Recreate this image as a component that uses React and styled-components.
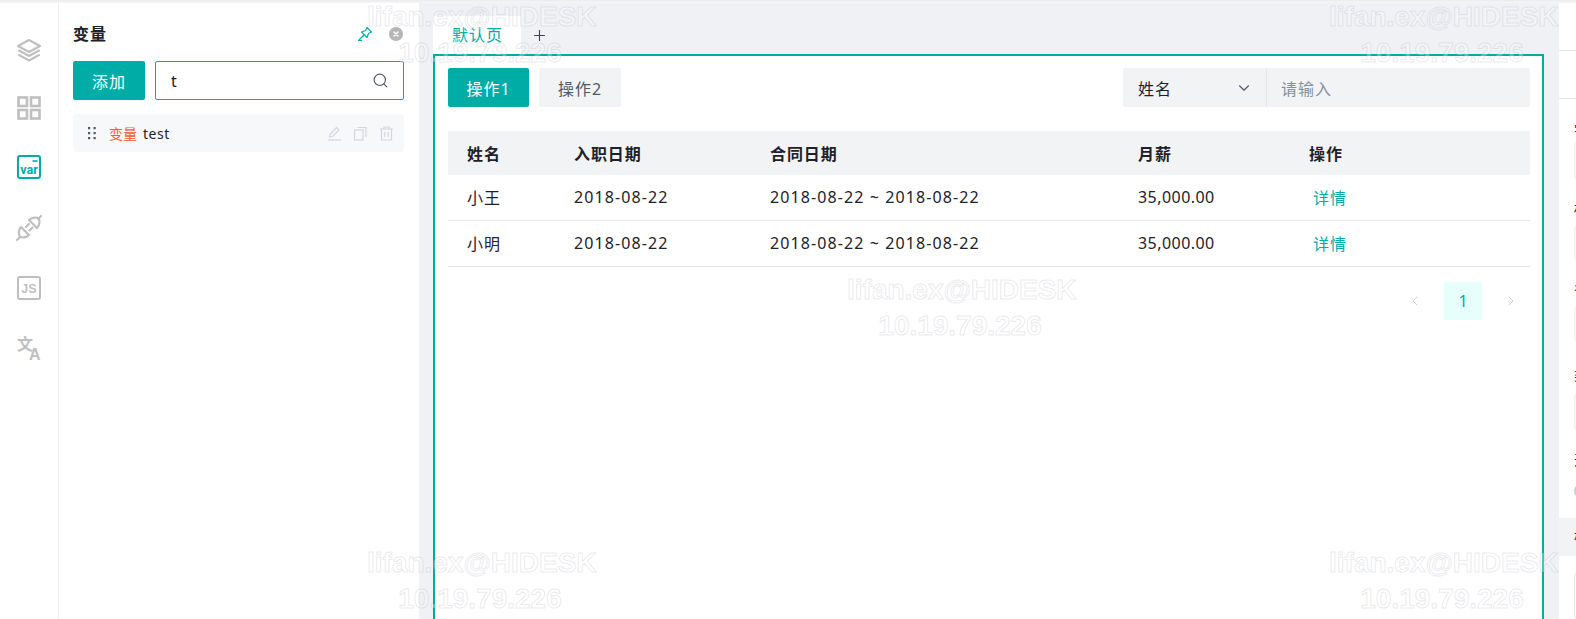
import React from 'react';
import styled, { createGlobalStyle } from 'styled-components';
import { Search, ChevronDown, ChevronLeft, ChevronRight, Plus } from 'lucide-react';

const TEAL = '#00ada6';

const Global = createGlobalStyle`
  html, body { margin: 0; padding: 0; height: 100%; overflow: hidden; background: #fff; }
  #root { height: 100%; }
  * { box-sizing: border-box; }
  body { font-family: "Noto Sans", "Noto Sans CJK SC", sans-serif; color: #1d2129; }
`;

const Page = styled.div`
  position: relative;
  width: 1576px;
  height: 619px;
  overflow: hidden;
  display: flex;
  flex-direction: column;
`;
const TopEdge = styled.div`
  flex: none;
  height: 3px;
  background: linear-gradient(#ececee, #f6f6f7);
`;
const Body = styled.div`
  flex: 1;
  min-height: 0;
  display: flex;
`;

const Rail = styled.nav`
  flex: none;
  width: 59px;
  border-right: 1px solid #eeeeee;
  display: flex;
  flex-direction: column;
  align-items: center;
  padding: 35px 1px 0 0;
  gap: 36px;
`;
const RailIcon = styled.svg`
  width: 24px;
  height: 24px;
  display: block;
  flex: none;
  overflow: visible;
  margin-top: ${p => p.$nudge || 0}px;
  color: ${p => (p.$active ? TEAL : '#bfbfbf')};
`;

const Panel = styled.aside`
  flex: none;
  width: 360px;
  padding: 0 15px 0 14px;
  display: flex;
  flex-direction: column;
`;
const PanelHead = styled.div`
  height: 58px;
  display: flex;
  align-items: center;
  padding-top: 4px;
`;
const PanelTitle = styled.h2`
  margin: 0;
  flex: 1;
  font-size: 16px;
  line-height: 22px;
  letter-spacing: 1px;
  font-weight: 700;
`;
const CloseDot = styled.svg`
  width: 14px;
  height: 14px;
  margin-left: 16px;
  margin-right: 1px;
`;
const AddRow = styled.div`
  display: flex;
  gap: 10px;
  height: 39px;
`;
const PrimaryButton = styled.button`
  flex: none;
  width: ${p => p.$w}px;
  height: 39px;
  border: 0;
  border-radius: 2px;
  background: ${TEAL};
  color: #fff;
  font: inherit;
  font-size: 16px;
  letter-spacing: 1px;
  padding: 0;
`;
const SearchBox = styled.div`
  flex: 1;
  display: flex;
  align-items: center;
  border: 1px solid #14a8a3;
  border-radius: 2px;
  padding: 0 14px 0 15px;
  color: #4e5969;
`;
const SearchInput = styled.span`
  flex: 1;
  font-size: 16px;
  color: #1d2129;
`;
const VarRow = styled.div`
  margin-top: 14px;
  height: 38px;
  background: #f7f8fa;
  border-radius: 4px;
  display: flex;
  align-items: center;
  padding: 0 10px 0 15px;
  font-size: 14px;
`;
const Grip = styled.svg`
  width: 8px;
  height: 14px;
  margin-right: 13px;
  color: #4e5969;
`;
const VarKind = styled.span`
  color: #ff5a1f;
  margin-right: 6px;
`;
const VarName = styled.span`
  flex: 1;
  letter-spacing: 0.5px;
`;
const RowIcon = styled.svg`
  width: 15px;
  height: 15px;
  margin-left: 11px;
  color: #d4d6dc;
`;

const Main = styled.main`
  flex: none;
  width: 1140px;
  background: #f0f1f5;
  padding: 0 15px 0 14px;
  display: flex;
  flex-direction: column;
  min-height: 0;
`;
const TabBar = styled.div`
  flex: none;
  height: 51px;
  padding-top: 13px;
  display: flex;
  align-items: stretch;
`;
const Tab = styled.div`
  width: 88px;
  background: #fff;
  color: ${TEAL};
  font-size: 16px;
  letter-spacing: 1px;
  line-height: 22px;
  padding: 8px 0 0 19px;
`;
const AddTab = styled.div`
  width: 36px;
  display: flex;
  align-items: center;
  justify-content: center;
  color: #3d4450;
`;
const Frame = styled.section`
  flex: 1;
  min-height: 0;
  background: #fff;
  border: 2px solid ${TEAL};
  border-bottom: 0;
  padding: 12px 12px 0 13px;
`;
const Toolbar = styled.div`
  display: flex;
  align-items: center;
  gap: 10px;
  height: 39px;
`;
const SecondaryButton = styled(PrimaryButton)`
  background: #f2f3f5;
  color: #4e5969;
`;
const Filter = styled.div`
  margin-left: auto;
  width: 407px;
  height: 39px;
  border-radius: 2px;
  background: #f2f3f5;
  display: flex;
  font-size: 16px;
`;
const FilterSelect = styled.div`
  width: 144px;
  border-right: 1px solid #e5e6eb;
  display: flex;
  align-items: center;
  justify-content: space-between;
  padding: 0 13px 0 15px;
  color: #4e5969;
  letter-spacing: 1px;
`;
const FilterValue = styled.span`
  color: #1d2129;
`;
const FilterPlaceholder = styled.div`
  display: flex;
  align-items: center;
  padding-left: 14px;
  color: #86909c;
  letter-spacing: 1px;
`;
const Table = styled.div`
  margin-top: 24px;
  font-size: 16px;
  letter-spacing: 0.9px;
`;
const Row = styled.div`
  display: grid;
  grid-template-columns: 107px 196px 368px 171px 1fr;
  align-items: center;
  padding: 0 0 ${p => (p.$head ? 0 : 2)}px 19px;
  height: ${p => (p.$head ? 44 : 46)}px;
  background: ${p => (p.$head ? '#f2f3f5' : '#fff')};
  border-bottom: ${p => (p.$head ? '0' : '1px solid #e5e6eb')};
  font-weight: ${p => (p.$head ? 700 : 400)};
`;
const DateText = styled.span`
  letter-spacing: 1.1px;
`;
const Money = styled.span`
  letter-spacing: 0.45px;
`;
const DetailLink = styled.a`
  color: ${TEAL};
  margin-left: 4px;
`;
const Pager = styled.div`
  margin-top: 15px;
  display: flex;
  justify-content: flex-end;
  gap: 10px;
`;
const PageItem = styled.div`
  width: 38px;
  height: 38px;
  border-radius: 2px;
  display: flex;
  align-items: center;
  justify-content: center;
  font-size: 16px;
  color: ${p => (p.$active ? TEAL : '#c9cdd4')};
  background: ${p => (p.$active ? '#e6fffb' : 'transparent')};
`;

const Inspector = styled.aside`
  flex: none;
  width: 300px;
  display: flex;
  flex-direction: column;
  background: #fff;
`;
const InspectorBar = styled.div`
  flex: none;
  height: 48px;
  border-bottom: 1px solid #e5e6eb;
`;
const InspectorForm = styled.div`
  flex: none;
  height: 419px;
  padding: 21px 15px 0;
  font-size: 14px;
  line-height: 20px;
`;
const Label = styled.div`
  height: 20px;
`;
const Field = styled.div`
  height: ${p => p.$h}px;
  margin: ${p => p.$above}px 0 ${p => p.$below}px;
  background: #f7f8fa;
  border-radius: 4px;
  border: 1px solid #eeeff2;
`;
const Toggle = styled.div`
  width: 30px;
  height: 14px;
  margin-top: 14px;
  border-radius: 7px;
  background: #c9cdd4;
`;
const Section = styled.div`
  flex: none;
  height: 38px;
  background: #f2f3f5;
  padding: 9px 15px;
  font-size: 14px;
  line-height: 20px;
`;
const SectionBody = styled.div`
  margin: 16px 15px 0;
  height: 120px;
  border-radius: 4px;
  border: 1px solid #e5e6eb;
`;

const Watermarks = styled.div`
  position: absolute;
  inset: 0;
  pointer-events: none;
`;
const Stamp = styled.div`
  position: absolute;
  left: ${p => p.$x}px;
  top: ${p => p.$y}px;
  width: 226px;
  text-align: center;
  font-family: "Liberation Sans", Arial, sans-serif;
  font-weight: 700;
  font-size: 28px;
  line-height: 36px;
  white-space: nowrap;
  color: rgba(255, 255, 255, 0.3);
  -webkit-text-stroke: 1px rgba(140, 145, 165, 0.2);
`;

const stamps = [
  [367, -1], [1329, -1], [847, 272], [367, 545], [1329, 545],
];

const rows = [
  ['小王'], ['小明'],
];

const IconLayers = () => (
  <RailIcon viewBox="0 0 24 24" fill="none" stroke="currentColor" strokeWidth="2" strokeLinejoin="round" strokeLinecap="round">
    <path d="M12 2 23 8l-11 6L1 8z" />
    <path d="M2 12.500 12 18l10-5.500" />
    <path d="M2 17 12 22.500 22 17" />
  </RailIcon>
);
const IconGrid = () => (
  <RailIcon $nudge={-2} viewBox="0 0 24 24" fill="none" stroke="currentColor" strokeWidth="2.600">
    <rect x="1.500" y="1.500" width="8.500" height="8.500" />
    <rect x="14" y="1.500" width="8.500" height="8.500" />
    <rect x="1.500" y="14" width="8.500" height="8.500" />
    <rect x="14" y="14" width="8.500" height="8.500" />
  </RailIcon>
);
const IconVar = () => (
  <RailIcon $nudge={-1} $active viewBox="0 0 24 24" fill="none">
    <rect x="1" y="1" width="22" height="22" rx="2" stroke="currentColor" strokeWidth="2" />
    <path d="M15.500 6h5" stroke="currentColor" strokeWidth="1.600" />
    <text x="12" y="19" textAnchor="middle" fontFamily="Roboto, sans-serif" fontWeight="700" fontSize="12.500" fill="currentColor">var</text>
  </RailIcon>
);
const IconPlug = () => (
  <RailIcon $nudge={1} viewBox="0 0 24 24" fill="none" stroke="currentColor" strokeWidth="2.200" strokeLinecap="round" strokeLinejoin="round">
    <path d="M0 24 3 21" />
    <path d="M4 11 12 19C9 22 4.500 22 3 20.500 1.500 19 1 14 4 11z" />
    <path d="M12 4 20 12C23 9 23 4 21.500 2.500 20 1 15 1 12 4z" />
    <path d="M21 3 24 0" />
    <path d="M9 11 12 8M12.500 14.500 15.500 11.500" />
  </RailIcon>
);
const IconJs = () => (
  <RailIcon viewBox="0 0 24 24" fill="none">
    <rect x="1" y="1" width="22" height="22" rx="2" stroke="currentColor" strokeWidth="2" />
    <text x="12" y="17" textAnchor="middle" fontFamily="Liberation Sans, sans-serif" fontWeight="700" fontSize="12.500" fill="currentColor">JS</text>
  </RailIcon>
);
const IconTranslate = () => (
  <RailIcon viewBox="0 0 24 24" fill="currentColor">
    <text x="0" y="13.500" fontFamily="Noto Sans CJK SC, sans-serif" fontWeight="700" fontSize="16">文</text>
    <text x="12" y="23.500" fontFamily="Liberation Sans, sans-serif" fontWeight="700" fontSize="16">A</text>
  </RailIcon>
);

export default function App() {
  return (
    <Page>
      <Global />
      <TopEdge />
      <Body>
        <Rail>
          <IconLayers />
          <IconGrid />
          <IconVar />
          <IconPlug />
          <IconJs />
          <IconTranslate />
        </Rail>
        <Panel>
          <PanelHead>
            <PanelTitle>变量</PanelTitle>
            <svg width="16" height="16" viewBox="0 0 16 16" fill="none" stroke={TEAL} strokeWidth="1.200" strokeLinejoin="round" strokeLinecap="round">
              <path d="M10 1.500 14.500 6 11.500 7.500 10 11.500 4.500 6 8.500 4.500z" />
              <path d="M7 9 1.500 14.500h3" />
            </svg>
            <CloseDot viewBox="0 0 14 14">
              <circle cx="7" cy="7" r="7" fill="#b6b6b6" />
              <path d="M5 5l4 4M9 5l-4 4" stroke="#fff" strokeWidth="1.500" strokeLinecap="round" />
            </CloseDot>
          </PanelHead>
          <AddRow>
            <PrimaryButton $w={72}>添加</PrimaryButton>
            <SearchBox>
              <SearchInput>t</SearchInput>
              <Search size={17} strokeWidth={1.600} />
            </SearchBox>
          </AddRow>
          <VarRow>
            <Grip viewBox="0 0 8 14" fill="currentColor">
              <rect x="0" y="1" width="2.200" height="2.200" />
              <rect x="5.500" y="1" width="2.200" height="2.200" />
              <rect x="0" y="6" width="2.200" height="2.200" />
              <rect x="5.500" y="6" width="2.200" height="2.200" />
              <rect x="0" y="11" width="2.200" height="2.200" />
              <rect x="5.500" y="11" width="2.200" height="2.200" />
            </Grip>
            <VarKind>变量</VarKind>
            <VarName>test</VarName>
            <RowIcon viewBox="0 0 15 15" fill="none" stroke="currentColor" strokeWidth="1.200" strokeLinejoin="round">
              <path d="M2.500 11 3 8.500 9.500 1.500 12 4 5.500 10.500z" />
              <path d="M1 14h13" />
            </RowIcon>
            <RowIcon viewBox="0 0 15 15" fill="none" stroke="currentColor" strokeWidth="1.200">
              <rect x="1.500" y="4" width="8.500" height="10" />
              <path d="M4.500 1.500h8.500v9.500" />
            </RowIcon>
            <RowIcon viewBox="0 0 15 15" fill="none" stroke="currentColor" strokeWidth="1.200">
              <path d="M1 3h13M5 3V1h5v2M2.500 3v11h10V3" />
              <path d="M5.800 6v5M9.200 6v5" />
            </RowIcon>
          </VarRow>
        </Panel>
        <Main>
          <TabBar>
            <Tab>默认页</Tab>
            <AddTab><Plus size={17} strokeWidth={1.600} /></AddTab>
          </TabBar>
          <Frame>
            <Toolbar>
              <PrimaryButton $w={81}>操作1</PrimaryButton>
              <SecondaryButton $w={82}>操作2</SecondaryButton>
              <Filter>
                <FilterSelect>
                  <FilterValue>姓名</FilterValue>
                  <ChevronDown size={18} strokeWidth={1.500} />
                </FilterSelect>
                <FilterPlaceholder>请输入</FilterPlaceholder>
              </Filter>
            </Toolbar>
            <Table>
              <Row $head>
                <span>姓名</span><span>入职日期</span><span>合同日期</span><span>月薪</span><span>操作</span>
              </Row>
              {rows.map(([name]) => (
                <Row key={name}>
                  <span>{name}</span>
                  <DateText>2018-08-22</DateText>
                  <DateText>2018-08-22 ~ 2018-08-22</DateText>
                  <Money>35,000.00</Money>
                  <DetailLink>详情</DetailLink>
                </Row>
              ))}
            </Table>
            <Pager>
              <PageItem><ChevronLeft size={16} strokeWidth={1.500} /></PageItem>
              <PageItem $active>1</PageItem>
              <PageItem><ChevronRight size={16} strokeWidth={1.500} /></PageItem>
            </Pager>
          </Frame>
        </Main>
        <Inspector>
          <InspectorBar />
          <InspectorBar />
          <InspectorForm>
            <Label>字段</Label>
            <Field $h={38} $above={2} $below={19} />
            <Label>标题</Label>
            <Field $h={36} $above={6} $below={17} />
            <Label>名称</Label>
            <Field $h={36} $above={8} $below={23} />
            <Label>类型</Label>
            <Field $h={38} $above={8} $below={19} />
            <Label>开关</Label>
            <Toggle />
          </InspectorForm>
          <Section>样式</Section>
          <SectionBody />
        </Inspector>
      </Body>
      <Watermarks>
        {stamps.map(([x, y]) => (
          <Stamp key={`${x}-${y}`} $x={x} $y={y}>lifan.ex@HIDESK<br />10.19.79.226</Stamp>
        ))}
      </Watermarks>
    </Page>
  );
}
